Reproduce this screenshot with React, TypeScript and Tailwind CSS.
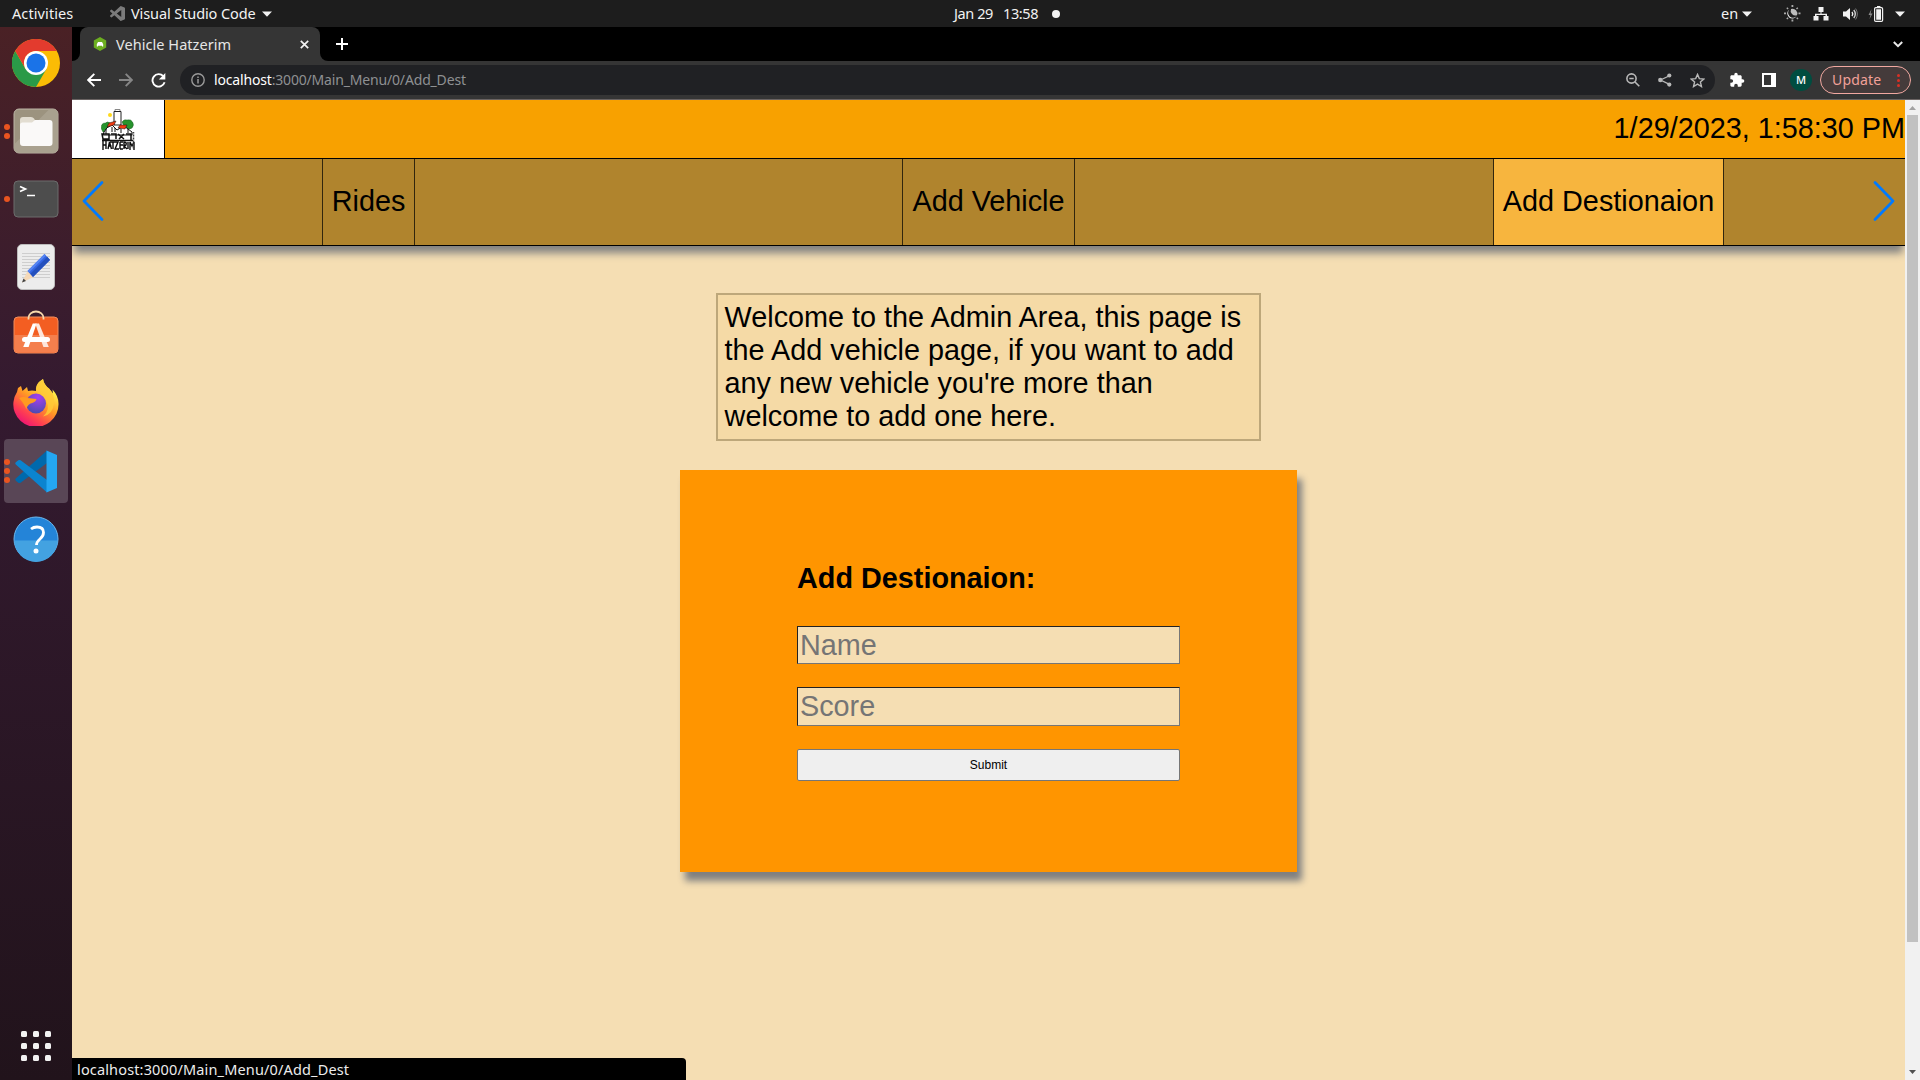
import React from "react";

const ui = "font-['Noto_Sans',sans-serif] whitespace-nowrap";

function Caret({ className = "" }: { className?: string }) {
  return (
    <svg width="10" height="6" viewBox="0 0 10 6" className={className}>
      <path d="M0 0.5h10L5 5.8z" fill="#f2f2f2" />
    </svg>
  );
}

function VSCodeMark() {
  return (
    <svg width="15" height="15" viewBox="0 0 24 24" fill="#7b7b7b">
      <path d="M23.15 2.587 18.21.21a1.494 1.494 0 0 0-1.705.29l-9.46 8.63-4.12-3.128a.999.999 0 0 0-1.276.057L.327 7.261A1 1 0 0 0 .326 8.74L3.899 12 .326 15.26a1 1 0 0 0 .001 1.479L1.65 17.94a.999.999 0 0 0 1.276.057l4.12-3.128 9.46 8.63a1.492 1.492 0 0 0 1.704.29l4.942-2.377A1.5 1.5 0 0 0 24 20.06V3.939a1.5 1.5 0 0 0-.85-1.352zm-5.146 14.861L10.826 12l7.178-5.448v10.896z" />
    </svg>
  );
}

function SystemBar() {
  return (
    <header className={`${ui} grid h-[27px] grid-cols-3 items-center bg-[#1d1d1d] text-[14.5px] leading-[27px] text-[#f2f2f2]`}>
      <div className="flex items-center">
        <span className="ml-3 w-[98px] tracking-[0.1px]">Activities</span>
        <VSCodeMark />
        <span className="ml-[6px] w-[131px] tracking-[-0.1px]">Visual Studio Code</span>
        <Caret />
      </div>
      <div className="flex items-center pl-[314px]">
        <span className="w-[42px] tracking-[-0.4px]">Jan 29</span>
        <span className="ml-[7px] w-[42px] tracking-[-0.4px]">13:58</span>
        <span className="ml-[7px] size-2 rounded-full bg-[#f2f2f2]" />
      </div>
      <div className="flex items-center justify-end pr-[15px]">
        <span className="w-[21px]">en</span>
        <Caret className="mr-[32px]" />
        <svg width="17" height="17" viewBox="0 0 17 17" className="mr-[12px]" fill="#f2f2f2">
          <path d="M5.3 4.5A5 5 0 1 0 12.6 11 4.6 4.6 0 0 1 5.3 4.5z" />
          <path d="M7 4a4.8 4.8 0 0 1 6 6.300A4.800 4.800 0 0 1 7 4z" fill="#bdbdbd" />
          <path d="M7.500 0h1.800v2H7.500zM7.500 14.500h1.800v2H7.500zM0 7.400h2v1.800H0zM14.500 7.400h2v1.800h-2zM2.300 3.300l1-1 1.300 1.300-1 1zM12 3.600l1.300-1.300 1 1L13 4.600zM2.300 13.600l1.300-1.300 1 1-1.300 1.300zM12.200 13.200l1-1 1.300 1.300-1 1z" fill="#aaa" />
        </svg>
        <svg width="16" height="14" viewBox="0 0 16 14" className="mr-[14px]" fill="#f2f2f2">
          <path d="M5.500 0h5v5h-2v1.700H14V9h1.500v4.500h-5V9h2V8h-9v1h2v4.500h-5V9H2V6.700h5.500V5h-2z" />
        </svg>
        <svg width="15" height="14" viewBox="0 0 15 14" className="mr-[10px]" fill="none" stroke="#f2f2f2" strokeWidth="1.400">
          <path d="M0 4.500h3L7 1v12L3 9.500H0z" fill="#f2f2f2" stroke="none" />
          <path d="M9 5q1.500 2 0 4" />
          <path d="M10.800 3q3 4 0 8" stroke="#cfcfcf" />
          <path d="M12.600 1.500q3.500 5.500 0 11" stroke="#777" strokeWidth="1" />
        </svg>
        <svg width="16" height="16" viewBox="0 0 16 16" className="mr-[11px]">
          <path d="M3.500 3 .5 9h2L1.500 13l3-5.500h-2z" fill="#8c8c8c" />
          <rect x="6.600" y="1.600" width="8" height="13.800" rx="1.200" fill="none" stroke="#f2f2f2" strokeWidth="1.200" />
          <path d="M9 0h3.400v1.500H9zM8.200 3.200h4.800v10.600H8.200z" fill="#f2f2f2" />
        </svg>
        <Caret />
      </div>
    </header>
  );
}

function ChromeIcon() {
  return (
    <svg width="48" height="48" viewBox="0 0 48 48">
      <circle cx="24" cy="24" r="24" fill="#fbbc05" />
      <path d="M3.200 12A24 24 0 0 0 24 48L34.400 30H13.600z" fill="#2a9a48" />
      <path d="M3.200 12A24 24 0 0 1 44.800 12H24a12 12 0 0 0-10.400 18z" fill="#e33b2e" />
      <circle cx="24" cy="24" r="12" fill="#fff" />
      <circle cx="24" cy="24" r="9.500" fill="#1a73e8" />
    </svg>
  );
}

function FilesIcon() {
  return (
    <svg width="46" height="46" viewBox="0 0 46 46">
      <rect x="1" y="1" width="44" height="44" rx="5" fill="#9c937f" stroke="#bdb6a7" />
      <path d="M1.500 36 36 1.500h4.500q4 0 4 4v35q0 4-4 4h-35q-4 0-4-4z" fill="#a9a18f" />
      <path d="M7 12q0-3 3-3h8q2 0 3 1.500l1.500 2.500v6H7z" fill="#e2ddd1" />
      <path d="M7 17q0-2.500 2.500-2.500H19l3-2.500h14.500q3 0 3 3v20q0 3-3 3H10q-3 0-3-3z" fill="#faf9f8" />
    </svg>
  );
}

function TerminalIcon() {
  return (
    <svg width="46" height="38" viewBox="0 0 46 38">
      <rect x="1" y="1" width="44" height="36" rx="4" fill="#4d4d4d" stroke="#6c6c6c" />
      <path d="M7 6.500 12.500 9 7 11.500" fill="none" stroke="#fff" strokeWidth="1.700" />
      <path d="M14 15.500h8" stroke="#fff" strokeWidth="1.500" />
    </svg>
  );
}

function EditorIcon() {
  return (
    <svg width="38" height="46" viewBox="0 0 38 46">
      <rect x="0.500" y="0.500" width="37" height="45" rx="4.500" fill="#ececec" stroke="#bbb" />
      <path d="M5 9.500h28M5 12.500h28M5 15.500h28M5 18.500h28M5 21.500h28M5 24.500h28M5 27.500h28M5 30.500h28M5 33.500h28" stroke="#cecece" />
      <path d="m10.500 27 6 6L5 38.500z" fill="#f5d9b8" />
      <path d="m6.500 34.500 2.500 2.500-4 1.500z" fill="#444" />
      <path d="M10.500 27 27.500 10l5.500 6-17 17z" fill="#3465e3" />
      <path d="M13.300 29.800 30.300 12.800 33 16 16 33z" fill="#2450bd" />
      <path d="M10.500 27 27.500 10l1.500 1.600-17 17z" fill="#5685f2" />
    </svg>
  );
}

function SoftwareIcon() {
  return (
    <svg width="46" height="44" viewBox="0 0 46 44">
      <rect x="1" y="7" width="44" height="36" rx="4" fill="#f35e22" stroke="#f28d5c" />
      <path d="M1.500 25h43v14q0 3.500-4 3.500h-35q-4 0-4-3.500z" fill="#f47f4d" />
      <path d="M15.500 9.500V8a7.500 6.500 0 0 1 15 0v1.500" fill="none" stroke="#f8d9ac" strokeWidth="1.800" />
      <path d="M10.200 37 19.800 13.500h3.800L15.600 37z" fill="#fff" />
      <path d="M22.200 13.500h3.800L35.800 37h-5.400z" fill="#fde6dc" />
      <rect x="9" y="27" width="28" height="5" rx="2.500" fill="#fff" />
    </svg>
  );
}

function FirefoxIcon() {
  return (
    <svg width="46" height="48" viewBox="0 0 46 48">
      <defs>
        <linearGradient id="ffBody" x1="0.850" y1="0.100" x2="0.250" y2="1">
          <stop offset="0.100" stopColor="#fff14a" />
          <stop offset="0.450" stopColor="#ff9a24" />
          <stop offset="0.750" stopColor="#ff4150" />
          <stop offset="1" stopColor="#ec0f78" />
        </linearGradient>
        <radialGradient id="ffGlobe" cx="0.600" cy="0.200" r="0.800">
          <stop offset="0" stopColor="#a63ff0" />
          <stop offset="1" stopColor="#4d4bb0" />
        </radialGradient>
      </defs>
      <path d="M30 1q1 6 6 9.500l4 5-.5-4q6 6.500 6 14A22.600 22.600 0 1 1 4 14l1-4 3-2 1.500 5 4.500-4 1 4q4-1 8 0 0-6 3-9z" fill="url(#ffBody)" />
      <circle cx="23" cy="25.500" r="10" fill="url(#ffGlobe)" />
      <path d="M6 20q5-2 8.500 0l9 1q-.5 3-6 4.500-4 2.500-4 6Q10 24 6 20z" fill="#ff9a20" />
      <path d="M23 13q-1-7 7-12 1 6 6 9.500 6 6 5 15-1 11-11 13 8-7 3-16-2-5-6-6 4 0 6 2-3-5-10-5.500z" fill="#ffc936" opacity="0.850" />
    </svg>
  );
}

function VSCodeIcon() {
  return (
    <svg width="43" height="43" viewBox="0 0 43 43">
      <path d="M.8 28.500q-1 1 0 2.200l2.500 2q1 .8 2.300 0L32 13V.5z" fill="#0069ac" />
      <path d="M.8 14.500q-1-1 0-2.200l2.500-2q1-.8 2.300 0L32 30v12.500z" fill="#0b84cf" />
      <path d="M31.500.5 42 5v33l-10.500 4.500z" fill="#24a7f2" />
    </svg>
  );
}

function HelpIcon() {
  return (
    <svg width="46" height="46" viewBox="0 0 46 46">
      <circle cx="23" cy="23" r="22" fill="#2484d8" stroke="#6cb8ee" />
      <path d="M1.500 24.500h43A21.500 21.500 0 0 1 1.500 24.500z" fill="#43a2e1" />
      <path d="M18 13q2.500-2 6-2 6.500 0 6.500 5.500 0 3.500-3.500 6.500t-3.500 6" fill="none" stroke="#fff" strokeWidth="2.800" />
      <circle cx="23" cy="35" r="2.500" fill="#fff" />
    </svg>
  );
}

function DockItem({ dots = 0, active = false, children }: { dots?: number; active?: boolean; children: React.ReactNode }) {
  return (
    <div className={active ? "relative mx-1 flex h-16 items-center justify-center rounded bg-[#594656]" : "relative mx-1 flex h-16 items-center justify-center"}>
      <div className="absolute inset-y-0 left-0 flex flex-col items-center justify-center gap-[3px]">
        {Array.from({ length: dots }, (_, i) => (
          <span key={i} className="size-[6px] rounded-full bg-[#e95420]" />
        ))}
      </div>
      {children}
    </div>
  );
}

function Dock() {
  return (
    <aside className="flex w-[72px] shrink-0 flex-col gap-1 bg-linear-to-b from-[#4a2125] via-[#341a30] via-35% to-[#21131b] pt-1">
      <DockItem><ChromeIcon /></DockItem>
      <DockItem dots={2}><FilesIcon /></DockItem>
      <DockItem dots={1}><TerminalIcon /></DockItem>
      <DockItem><EditorIcon /></DockItem>
      <DockItem><div className="mb-[6px]"><SoftwareIcon /></div></DockItem>
      <DockItem><div className="mb-[2px]"><FirefoxIcon /></div></DockItem>
      <DockItem dots={3} active><VSCodeIcon /></DockItem>
      <DockItem><HelpIcon /></DockItem>
      <div className="mx-auto mt-auto mb-[19px] grid grid-cols-3 gap-[6px]">
        {Array.from({ length: 9 }, (_, i) => (
          <span key={i} className="size-[6px] rounded-[1.500px] bg-[#f2f2f2]" />
        ))}
      </div>
    </aside>
  );
}

function TabStrip() {
  return (
    <div className="flex h-[34px] bg-black">
      <div className="flex w-2 items-end bg-[#353535]"><span className="h-[34px] w-2 rounded-br-lg bg-black" /></div>
      <div className="flex bg-black">
        <div className="flex w-[240px] items-center rounded-t-lg bg-[#353535] pr-[11px] pl-[13px]">
          <svg width="14" height="14" viewBox="0 0 14 14">
            <path d="M7 0l6.200 3.500v7L7 14 .8 10.500v-7z" fill="#6cae20" />
            <path d="M3.800 9.500V7.200L5 5h4l1.200 2.200v2.300H9V8.700H5v.8z" fill="#fff" />
          </svg>
          <span className={`${ui} ml-[9px] text-[14.5px] leading-5 tracking-[0.050px] text-[#e6e6e6]`}><span className="block -mt-px">Vehicle Hatzerim</span></span>
          <svg width="9" height="9" viewBox="0 0 9 9" className="ml-auto"><path d="M.8.8l7.400 7.400M8.200.8.8 8.200" stroke="#f2f2f2" strokeWidth="1.700" /></svg>
        </div>
      </div>
      <div className="flex flex-1 items-center justify-between bg-[#353535]">
        <div className="flex h-full flex-1 items-center justify-between rounded-bl-lg bg-black pr-[17px] pl-4">
          <svg width="12" height="12" viewBox="0 0 12 12"><path d="M6 0v12M0 6h12" stroke="#fff" strokeWidth="2" /></svg>
          <svg width="10" height="7" viewBox="0 0 10 7"><path d="M.8 1 5 5.200 9.200 1" fill="none" stroke="#e8e8e8" strokeWidth="2" /></svg>
        </div>
      </div>
    </div>
  );
}

function Toolbar() {
  return (
    <div className="flex h-[39px] items-center border-b border-[#6a6463] bg-[#353535] pr-[9px] pl-[15px]">
      <svg width="14" height="14" viewBox="0 0 14 14" fill="none" stroke="#fff" strokeWidth="1.900"><path d="M14 7H1.500M7.300.8 1.200 7l6.100 6.200" /></svg>
      <svg width="14" height="14" viewBox="0 0 14 14" className="ml-[18px]" fill="none" stroke="#868686" strokeWidth="1.900"><path d="M0 7h12.500M6.700.8 12.800 7l-6.100 6.200" /></svg>
      <svg width="15" height="15" viewBox="0 0 15 15" className="ml-[18px]"><path d="M12.300 3.200A6.200 6.200 0 1 0 13.600 9.300" fill="none" stroke="#fff" strokeWidth="1.900" /><path d="M14.300 0v6.500H7.800z" fill="#fff" /></svg>
      <div className="ml-[14px] flex h-[30px] w-[1535px] items-center rounded-full bg-[#202124] pr-[10px] pl-[11px]">
        <svg width="14" height="14" viewBox="0 0 14 14"><circle cx="7" cy="7" r="6.200" fill="none" stroke="#9a9a9a" strokeWidth="1.400" /><path d="M7 6v4.500M7 3.400v1.600" stroke="#9a9a9a" strokeWidth="1.500" /></svg>
        <span className={`${ui} ml-[9px] pb-[2px] text-[14px] tracking-[-0.170px] text-[#8e9092]`}><span className="text-white">localhost</span>:3000/Main_Menu/0/Add_Dest</span>
        <svg width="14" height="14" viewBox="0 0 14 14" className="ml-auto" fill="none" stroke="#b8b8b8" strokeWidth="1.600"><circle cx="5.500" cy="5.500" r="4.600" /><path d="m9 9 4.300 4.300M3.300 5.500h4.400" /></svg>
        <svg width="14" height="14" viewBox="0 0 14 14" className="ml-[18px]" fill="#b8b8b8"><path d="M12 2.500 2.500 7l9.500 4.700" fill="none" stroke="#b8b8b8" strokeWidth="1.300" /><circle cx="11.300" cy="2.500" r="2.100" /><circle cx="2.300" cy="7" r="2.200" /><circle cx="11.300" cy="11.600" r="2.100" /></svg>
        <svg width="15" height="15" viewBox="0 0 14 14" className="ml-[18px]"><path d="m7 1.300 1.700 3.900 4.200.4-3.200 2.800 1 4.200L7 10.400l-3.700 2.200 1-4.200L1.100 5.600l4.200-.4z" fill="none" stroke="#b8b8b8" strokeWidth="1.300" /></svg>
      </div>
      <svg width="16" height="16" viewBox="0 0 24 24" className="ml-[14px]" fill="#fff"><path d="M20.500 11H19V7c0-1.100-.9-2-2-2h-4V3.500a2.500 2.500 0 0 0-5 0V5H4c-1.100 0-2 .9-2 2v3.800h1.500a2.700 2.700 0 0 1 0 5.400H2V20c0 1.100.9 2 2 2h3.800v-1.500a2.700 2.700 0 0 1 5.400 0V22H17c1.100 0 2-.9 2-2v-4h1.500a2.500 2.500 0 0 0 0-5z" /></svg>
      <svg width="14" height="14" viewBox="0 0 14 14" className="ml-[17px]"><path d="M0 0h14v14H0zM2 2v10h7V2z" fill="#fff" fillRule="evenodd" /></svg>
      <span className={`${ui} ml-[14px] flex size-[22px] items-center justify-center rounded-full bg-[#004d40] text-[11px] font-medium text-white`}>M</span>
      <div className={`${ui} ml-2 flex h-7 w-[91px] items-center justify-between rounded-full border border-[#f2a9a1] bg-[#453b3b] pr-[10px] pl-[11px] text-[14px] text-[#f2a199]`}>
        <span className="pb-px tracking-[0.200px]">Update</span>
        <svg width="3" height="13" viewBox="0 0 3 13" fill="#d93025"><circle cx="1.500" cy="1.500" r="1.500" /><circle cx="1.500" cy="6.500" r="1.500" /><circle cx="1.500" cy="11.500" r="1.500" /></svg>
      </div>
    </div>
  );
}

function HatzerimLogo() {
  return (
    <svg width="34" height="43" viewBox="0 0 34 43">
      <circle cx="9" cy="7" r="2" fill="#ffd91a" />
      <g fill="#26932c" stroke="#1c5c20" strokeWidth="0.500">
        <path d="M.5 21q-1-6 4-6 2-2 4.500 0v5l-4 4H2z" />
        <path d="M21 14q2-3 5-2 4-1 5.500 2 2 3-.5 6-3 2-7 0z" />
      </g>
      <path d="M13 17V3.500h7V17z" fill="#fff" stroke="#222" strokeWidth="1" />
      <path d="M14 3V1.500h5V3" fill="none" stroke="#888" strokeWidth="1" />
      <path d="M3 24q2-5 8-7l5 5 7-4 8 6v3H2z" fill="#fff" stroke="#111" strokeWidth="1" />
      <path d="m6 19 2-4 7-2-2 4z" fill="#f03a12" stroke="#111" strokeWidth="0.500" />
      <path d="m17 20 2-3h7l-2 4z" fill="#f03a12" stroke="#111" strokeWidth="0.500" />
      <path d="M11 19v5M14 20v4M20 21v4M27 21v4M5 21v5" stroke="#111" strokeWidth="1" />
      <path d="M1 26h7v5H2zM10 26h5v5M17 26l6 5M23 26l-5 5M25 26h5v6M1 32.500h31" fill="none" stroke="#111" strokeWidth="1.500" />
      <path d="M2 33v9M5 33v8M2 37h3M7 41l1.500-7 2 7M7.500 38h3M9 34h5M12 34v7M14 34h3l-3 7h4M19 34v7M19 34h3M19 37h3M19 41h3M23 41v-7q3 0 2 3l-2 1 3 3M27 34v7M29 42v-8l2 4 2-4v8" fill="none" stroke="#0b0b0b" strokeWidth="1.400" />
      <path d="M32.500 24v17" stroke="#444" strokeWidth="1.500" strokeDasharray="1 .5" />
    </svg>
  );
}

function NavItem({ label, active = false }: { label: string; active?: boolean }) {
  return (
    <div className="flex w-[593px] justify-center">
      <button className={active ? "border-x border-[#32260d] bg-[#f7b53e] px-[9px] pb-[2px]" : "border-x border-[#32260d] px-[9px] pb-[2px]"}>{label}</button>
    </div>
  );
}

function Chevron({ flip = false }: { flip?: boolean }) {
  return (
    <svg width="22" height="40" viewBox="0 0 22 40" className={flip ? "absolute top-[22px] right-[10px] rotate-180" : "absolute top-[22px] left-[10px]"}>
      <path d="M20 1.500 2 20l18 18.500" fill="none" stroke="#007aff" strokeWidth="2.700" strokeLinecap="round" strokeLinejoin="round" />
    </svg>
  );
}

function Page() {
  return (
    <main className="flex-1 overflow-hidden bg-[#f5deb3] font-['Liberation_Sans',Arial,sans-serif] text-[28.800px] leading-[33px] text-black">
      <div className="flex h-[59px] items-stretch justify-between border-b border-black bg-[#f8a100]">
        <div className="flex w-[93px] items-center justify-center border-r border-black bg-white"><HatzerimLogo /></div>
        <time className="self-center whitespace-nowrap pb-[2px]">1/29/2023, 1:58:30 PM</time>
      </div>
      <nav className="relative flex h-[87px] gap-[27px] border-b border-black bg-[#b0842d] shadow-[0_9px_8px_-2px_#808080]">
        <NavItem label="Rides" />
        <NavItem label="Add Vehicle" />
        <NavItem label="Add Destionaion" active />
        <Chevron />
        <Chevron flip />
      </nav>
      <div className="flex flex-col items-center pt-[47px]">
        <p className="h-[148px] w-[545px] border-2 border-[#bda77a] bg-[#f5daa6] py-[6px] pr-[5px] pl-[6.600px]">
          Welcome to the Admin Area, this page is the Add vehicle page, if you want to add any new vehicle you're more than welcome to add one here.
        </p>
        <form className="mt-[29px] flex h-[402px] w-[617px] flex-col bg-[#ff9500] px-[117px] pt-[92px] shadow-[5px_9px_7px_#808080]" onSubmit={(e) => e.preventDefault()}>
          <h2 className="font-bold">Add Destionaion:</h2>
          <input placeholder="Name" className="mt-[31px] h-[38px] border border-t-[#222] border-r-[#767676] border-b-[#767676] border-l-[#222] bg-[#f5deb3] px-[2px] placeholder:text-[#757575]" />
          <input placeholder="Score" className="mt-[23px] h-[39px] border border-t-[#222] border-r-[#767676] border-b-[#767676] border-l-[#222] bg-[#f5deb3] px-[2px] placeholder:text-[#757575]" />
          <button className="mt-[23px] h-8 rounded-[2px] border border-[#767676] bg-[#efefef] text-[12px] leading-none">Submit</button>
        </form>
      </div>
    </main>
  );
}

function Scrollbar() {
  return (
    <div className="flex w-[15px] flex-col items-center bg-[#f1f1f1]">
      <svg width="7" height="4" viewBox="0 0 7 4" className="mt-[6px] mb-[5px] shrink-0"><path d="M3.500 0 7 4H0z" fill="#a3a3a3" /></svg>
      <div className="h-[827px] w-[11px] bg-[#c1c1c1]" />
      <svg width="7" height="4" viewBox="0 0 7 4" className="mt-auto mb-[6px]"><path d="M0 0h7L3.500 4z" fill="#505050" /></svg>
    </div>
  );
}

export default function App() {
  return (
    <div className="flex h-[1080px] w-[1920px] flex-col overflow-hidden bg-black">
      <SystemBar />
      <div className="flex min-h-0 flex-1">
        <Dock />
        <div className="relative flex min-w-0 flex-1 flex-col">
          <TabStrip />
          <Toolbar />
          <div className="flex min-h-0 flex-1">
            <Page />
            <Scrollbar />
          </div>
          <div className={`${ui} absolute bottom-0 left-0 h-[22px] w-[614px] rounded-tr bg-black pl-[5px] text-[14.500px] leading-[22px] tracking-[0.150px] text-[#ececec]`}>
            localhost:3000/Main_Menu/0/Add_Dest
          </div>
        </div>
      </div>
    </div>
  );
}
